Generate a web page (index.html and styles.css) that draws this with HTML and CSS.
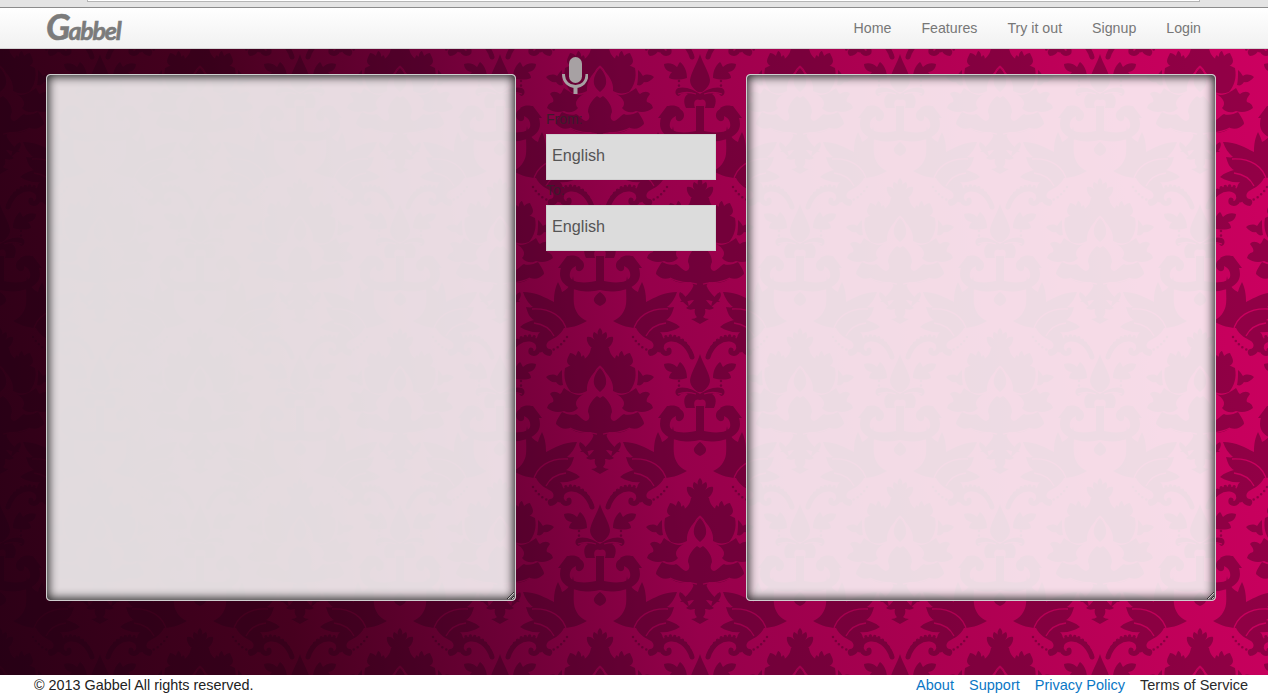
FILE: index.html
```html
<!DOCTYPE html>
<html lang="en">
<head>
<meta charset="utf-8">
<title>Gabbel</title>
<link rel="stylesheet" href="styles.css">
</head>
<body>
<div class="chrome"><div class="chrome-field"></div></div>
<header class="topbar">
  <a class="logo" href="#"><span class="logo-cap">G</span>abbel</a>
  <nav class="nav">
    <a href="#">Home</a>
    <a href="#">Features</a>
    <a href="#">Try it out</a>
    <a href="#">Signup</a>
    <a href="#">Login</a>
  </nav>
</header>
<main class="stage">
  <svg class="damask" aria-hidden="true">
    <defs>
      <mask id="veins" maskUnits="userSpaceOnUse" x="-110" y="-160" width="220" height="320">
        <rect x="-110" y="-160" width="220" height="320" fill="#fff"/>
        <g fill="none" stroke="#000" stroke-width="1.3">
          <path d="M33,4C36,-12 50,-20 68,-19"/>
          <path d="M46,8C50,0 58,-4 66,-5"/>
          <path d="M0,38C5,42 9,50 8,60C6,64 3,66 0,67"/>
          <path d="M12,66C14,74 16,80 14,86"/>
          <path d="M3,106C10,104 20,106 30,100"/>
          <path d="M4,-84C10,-86 16,-86 22,-84"/>
        </g>
      </mask>
      <g id="half" mask="url(#veins)">
        <path d="M0,0C3,3 3,6 1,8C3,5 6,4 6,4C8,7 7,10 5,12C8,9 11,8 13,9C14,13 11,18 8,20L0,22Z"/>
        <path d="M0,20H9C10,26 13,30 18,32L35,40C37,50 34,58 29,64C24,66 18,66 13,63C14,54 8,46 3,42L0,38Z"/>
        <path d="M0,40C4,44 7,50 6,56C5,60 2,62 0,64Z"/>
        <path d="M17,37C14,32 15,28 17,27C18,29 19,29 19,27C19,25 21,23 22,23C23,25 24,27 24,28C26,26 28,25 30,25C31,28 33,30 33,33C33,36 30,38 27,39Z"/>
        <path d="M37,57C38,52 38,48 38,42C41,44 42,47 43,48C46,46 50,46 54,49C51,53 47,55 44,54C42,57 40,58 37,57Z"/>
        <path d="M16,66C24,69 30,64 36,60C38,63 38,65 40,66C44,63 48,63 50,66C47,70 46,72 47,74C50,75 52,76 53,80C48,84 42,85 36,83C32,85 26,85 22,80C26,76 24,70 16,66Z"/>
        <path d="M3,68C8,72 12,78 12,84C10,88 10,92 14,93C18,92 20,88 24,86C28,88 34,86 38,84C42,90 44,93 44,96C40,100 36,102 30,100C26,104 18,106 9,104L6,108H0V70Z"/>
        <path d="M20,114C23,118 18,124 11,129C12,123 14,117 20,114Z"/>
        <path d="M0,106H6C8,114 16,120 20,124C14,124 9,122 6,122C8,125 10,127 14,130C10,133 7,131 5,131C6,134 5,137 3,139C4,140 7,141 9,141C6,143 3,144 0,146Z"/>
        <path d="M8,-121C12,-134 22,-140 30,-139C38,-138 41,-131 37,-126C34,-123 30,-125 31,-128" class="arch"/>
        <path d="M8,-123C13,-137 22,-143 31,-142C40,-141 44,-133 40,-126" class="beads"/>
        <path d="M13,-100C13,-106 15,-112 20,-116C22,-114 22,-112 23,-111C26,-114 31,-116 36,-114C36,-110 33,-106 28,-106C30,-104 31,-102 31,-100C26,-98 20,-98 13,-100Z"/>
        <path d="M0,-124C3,-114 9,-106 10,-98C10,-92 5,-88 2,-86L0,-86Z"/>
        <path d="M21,-97V-88" class="dots"/>
        <path d="M0,-84C6,-88 14,-92 22,-90C26,-88 25,-82 21,-82C19,-85 15,-86 12,-84C16,-82 17,-76 14,-70L5,-70C7,-76 5,-80 0,-78Z"/>
        <path d="M20,-70C26,-74 30,-72 33,-72L42,-60C36,-60 30,-60 24,-64Z"/>
        <path d="M0,-38C14,-34 40,-38 40,-54C40,-66 30,-72 22,-70C16,-68 14,-62 18,-58C22,-55 25,-58 24,-62C29,-60 31,-55 30,-51C28,-45 14,-44 0,-48Z"/>
        <path d="M0,-72H4V-44H0Z"/>
        <path d="M0,-36C3,-34 7,-30 6,-27C5,-24 2,-23 0,-22Z"/>
        <path d="M27,-52C28,-44 33,-38 38,-36C39,-40 40,-42 42,-46C46,-38 46,-30 46,-26C54,-30 64,-36 77,-36C75,-30 72,-25 67,-21C70,-20 72,-21 74,-21C72,-14 70,-10 66,-8C70,-7 76,-5 80,-1C74,3 66,5 60,4C64,8 64,14 60,20C58,25 54,28 50,28C47,26 47,22 50,21C54,21 55,16 51,13C46,10 40,8 36,0C30,0 22,-2 13,-7C20,-10 25,-16 26,-24C27,-32 25,-42 27,-52Z"/>
        <path d="M33,9Q40,20 50,23" class="dots"/>
      </g>
      <g id="motif">
        <use href="#half"/>
        <use href="#half" transform="scale(-1,1)"/>
      </g>
      <pattern id="tile" width="200" height="300" x="100" y="-49" patternUnits="userSpaceOnUse">
        <g class="damask-ink">
          <use href="#motif" x="100" y="28"/>
          <use href="#motif" x="100" y="328"/>
          <use href="#motif" x="0" y="178"/>
          <use href="#motif" x="200" y="178"/>
          <use href="#motif" x="0" y="-122"/>
          <use href="#motif" x="200" y="-122"/>
        </g>
      </pattern>
    </defs>
    <rect width="100%" height="100%" fill="url(#tile)"/>
  </svg>
  <textarea class="panel"></textarea>
  <form class="controls">
    <svg class="mic" width="26" height="37" viewBox="0 0 26 37" aria-hidden="true">
      <rect x="7" y="0" width="13" height="26" rx="6.5" fill="#a7a1a3"/>
      <path d="M1.5,17C1.5,25 7,29.5 13.5,29.5S25,25 25,17" fill="none" stroke="#a7a1a3" stroke-width="3"/>
      <rect x="11.5" y="29" width="4" height="8" fill="#a7a1a3"/>
    </svg>
    <label class="field-label from" for="from">From:</label>
    <select class="lang" id="from"><option>English</option></select>
    <label class="field-label" for="to">To:</label>
    <select class="lang" id="to"><option>English</option></select>
  </form>
  <textarea class="panel"></textarea>
</main>
<footer class="foot">
  <span class="copy">© 2013 Gabbel All rights reserved.</span>
  <nav class="foot-links">
    <a href="#">About</a>
    <a href="#">Support</a>
    <a href="#">Privacy Policy</a>
    <a href="#" class="plain">Terms of Service</a>
  </nav>
</footer>
</body>
</html>
```
FILE: styles.css
```css
* { box-sizing: border-box; }
html, body { height: 100%; }
body {
  margin: 0;
  height: 696px;
  overflow: hidden;
  display: flex;
  flex-direction: column;
  background: #fff;
  font-family: "Liberation Sans", Arial, sans-serif;
  font-size: 14px;
}
a { text-decoration: none; }

.chrome {
  height: 8px;
  flex: none;
  padding-left: 87px;
  padding-right: 68px;
  background: #e4e4e4;
  border-bottom: 1px solid #8c8c8c;
}
.chrome-field {
  height: 2px;
  background: #fff;
  border: solid #b5b5b5;
  border-width: 0 1px 1px;
}

.topbar {
  height: 41px;
  flex: none;
  display: flex;
  align-items: center;
  justify-content: space-between;
  padding: 0 67px 0 46px;
  background: linear-gradient(#ffffff, #f1f1f1);
  border-bottom: 1px solid #d2d2d2;
}
.logo {
  font-family: Lato, sans-serif;
  font-style: italic;
  font-weight: 700;
  font-size: 25px;
  letter-spacing: -1.2px;
  color: #7b7b7b;
  -webkit-text-stroke: 0.6px #7b7b7b;
  line-height: 41px;
}
.logo-cap { font-size: 36px; letter-spacing: -2px; }
.nav { display: flex; gap: 30px; }
.nav a { color: #777; font-size: 14.2px; line-height: 40px; }

.stage {
  position: relative;
  flex: 1;
  min-height: 0;
  display: flex;
  align-items: flex-start;
  gap: 30px;
  padding: 8px 46px 0;
  background: linear-gradient(82deg, #2c0016 0%, #47001f 22%, #6e0037 38%, #96004b 52%, #aa0050 68%, #c2005a 88%, #cc0060 100%);
}
.damask {
  position: absolute;
  left: 0;
  top: 0;
  width: 100%;
  height: 100%;
}
.damask-ink { fill: #1a0010; stroke: none; opacity: 0.32; }
.arch { fill: none; stroke: #1a0010; stroke-width: 5; stroke-linecap: round; }
.beads { fill: none; stroke: #1a0010; stroke-width: 3.4; stroke-linecap: round; stroke-dasharray: 0 4.4; }
.dots { fill: none; stroke: #1a0010; stroke-width: 2.6; stroke-linecap: round; stroke-dasharray: 0 4.6; }

.panel {
  position: relative;
  flex: none;
  display: block;
  width: 470px;
  height: 527px;
  margin: 17px 0 0;
  padding: 8px;
  background: rgba(255, 255, 255, 0.86);
  border: 1px solid #cfcfcf;
  border-radius: 4px;
  box-shadow: inset 0 0 10px 2px rgba(0, 0, 0, 0.8);
  outline: none;
}

.controls {
  position: relative;
  flex: none;
  width: 170px;
  display: flex;
  flex-direction: column;
  align-items: flex-start;
}
.mic { display: block; margin-left: 16px; }
.field-label {
  display: block;
  line-height: 20px;
  margin-bottom: 5px;
  color: #3e1a2c;
  font-size: 14px;
}
.field-label.from { margin-top: 15px; }
.lang {
  appearance: none;
  -webkit-appearance: none;
  display: block;
  width: 170px;
  height: 46px;
  padding: 0 5px 4px;
  border: 1px solid #d0d0d0;
  border-radius: 0;
  background: #dcdcdc;
  color: #555;
  font-family: "Liberation Sans", Arial, sans-serif;
  font-size: 16.2px;
}

.foot {
  height: 21px;
  flex: none;
  display: flex;
  align-items: center;
  justify-content: space-between;
  padding: 0 20px 2px 34px;
  color: #222;
  font-size: 14.4px;
}
.foot-links { display: flex; gap: 15px; }
.foot-links a { color: #0b77c5; font-size: 14.5px; }
.foot-links a.plain { color: #2a2a2a; }
```
